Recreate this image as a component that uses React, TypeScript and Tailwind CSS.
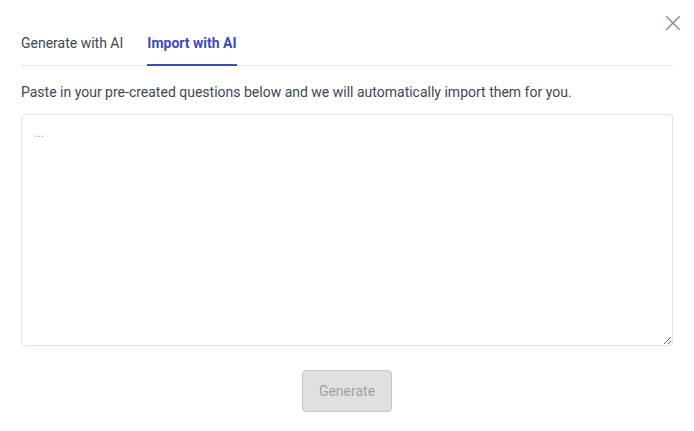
import { X } from "lucide-react";

const App = () => {
  return (
    <div className="w-[694px] h-[431px] bg-white relative font-['Roboto',sans-serif] text-[14px]">
      <button className="absolute right-[8px] top-[10px] text-[#8a94a6]">
        <X size={26} strokeWidth={1.4} />
      </button>
      <div className="px-[21px] pt-[33px] flex flex-col">
        <div className="flex gap-6 border-b border-[#e5e7eb]">
          <div className="pb-[12px] text-[#3f4654] leading-[20px]">Generate with AI</div>
          <div className="pb-[11px] text-[#3a4bbd] font-bold leading-[20px] border-b-2 border-[#3a4bbd] -mb-px">
            Import with AI
          </div>
        </div>
        <p className="mt-[16px] text-[#3f4654] leading-[20px]">
          Paste in your pre-created questions below and we will automatically import them for you.
        </p>
        <textarea
          placeholder="..."
          className="mt-[12px] h-[232px] w-full rounded-[4px] border border-[#e2e2e2] px-[12px] py-[8px] text-[13px] leading-[20px] placeholder:text-[#9ca3af] outline-none"
        />
        <div className="flex justify-center mt-[24px]">
          <button
            disabled
            className="w-[90px] h-[42px] rounded-[4px] bg-[#e0e0e0] border border-[#c6c6c6] text-[#a0a0a0]"
          >
            Generate
          </button>
        </div>
      </div>
    </div>
  );
};

export default App;
